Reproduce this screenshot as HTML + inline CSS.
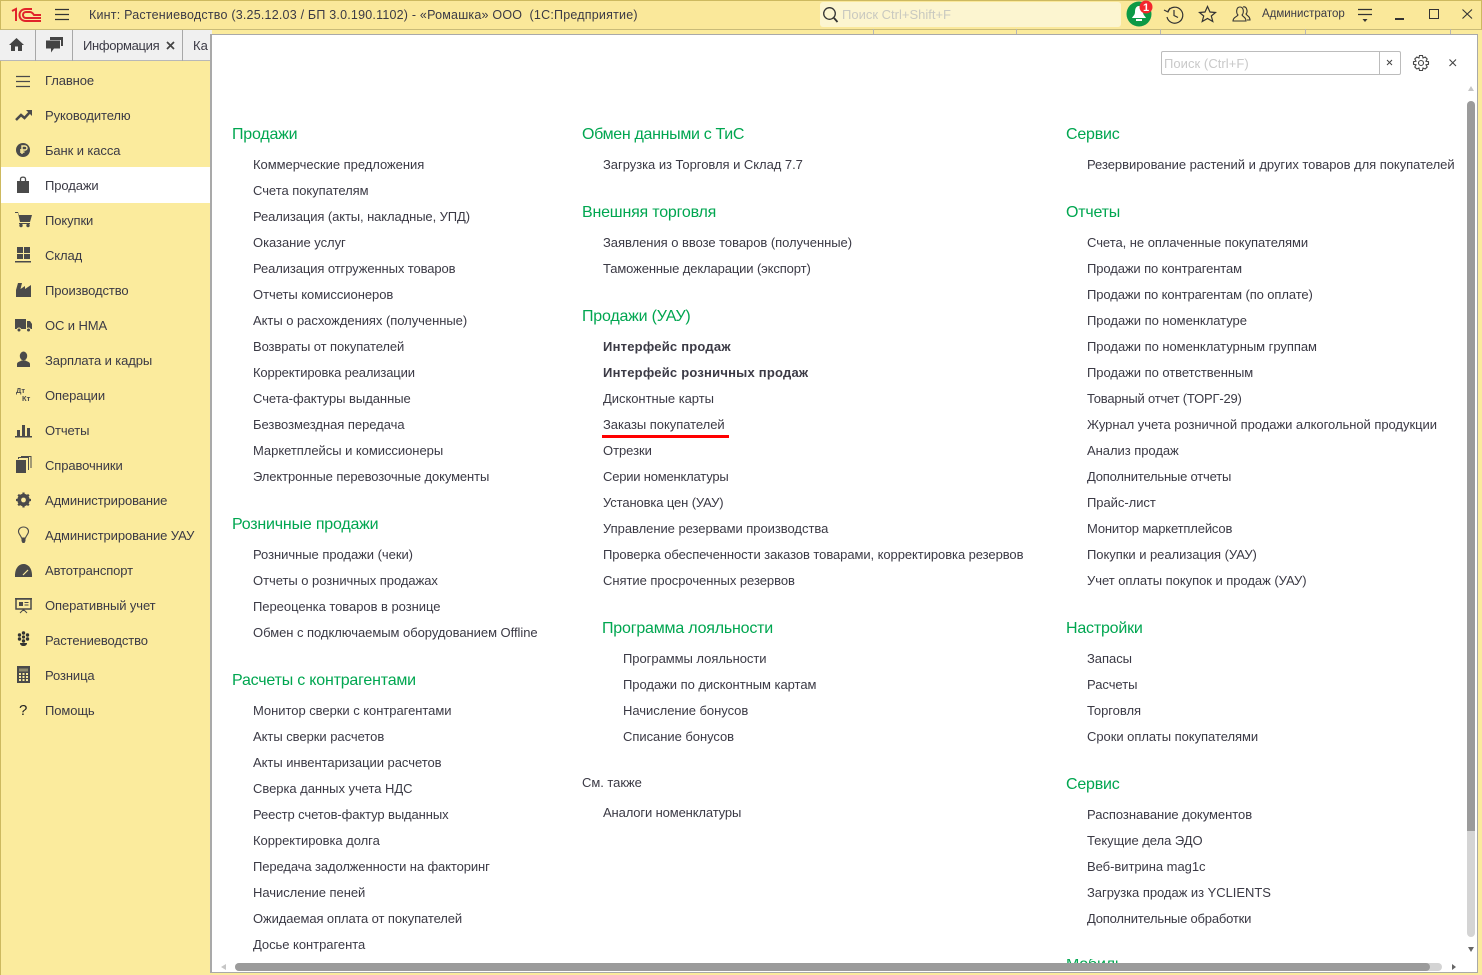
<!DOCTYPE html>
<html lang="ru"><head><meta charset="utf-8"><title>1С</title>
<style>
html,body{margin:0;padding:0;width:1482px;height:975px;overflow:hidden;background:#fbeb9d;font-family:"Liberation Sans","Noto Sans CJK SC",sans-serif}
*{box-sizing:border-box}
.a{position:absolute;white-space:nowrap}
#top{position:absolute;left:0;top:0;width:1482px;height:30px;background:#fae89a;border:1px solid #cdb95f;border-bottom:1px solid #c9bb78}
#tabs{position:absolute;left:0;top:30px;width:212px;height:31px;background:#f0f0f0;border-bottom:1px solid #b8b8b8}
.tabdiv{position:absolute;top:30px;width:1px;height:31px;background:#a8a8a8}
#side{position:absolute;left:0;top:61px;width:211px;height:914px;background:#fbeb9d;border-left:1px solid #cdb95f}
#sel{position:absolute;left:1px;top:167px;width:210px;height:36px;background:#fff}
#main{position:absolute;left:210px;top:34px;width:1268px;height:939px;background:#fff;border:1px solid #a9a9a9;border-width:1px 1px 1px 2px}
.m{position:absolute;left:45px;margin-top:1px;font-size:13px;letter-spacing:-.1px;color:#3b3a45;line-height:16px;white-space:nowrap}
.l{position:absolute;margin-top:1px;font-size:13px;letter-spacing:-.04px;color:#3b3a45;line-height:16px;white-space:nowrap}
.b{font-weight:bold;letter-spacing:.22px}
.h{position:absolute;margin-top:2px;font-size:16px;letter-spacing:-.2px;color:#00a650;line-height:20px;white-space:nowrap}
svg.i{position:absolute;left:15px;width:18px;height:18px;fill:#4a4a4a}
</style></head><body>

<div id="top"></div>
<svg class="a" style="left:11px;top:6px" width="32" height="17" viewBox="0 0 32 17"><g fill="none" stroke="#e1232a" stroke-width="2"><path d="M1 5 5 3V15"/><path d="M30 15H15C11 15 8.500 12.500 8.500 9S11 3 15 3H21"/><path d="M30 12H15C13 12 12 10.500 12 9S13 6 15 6H19C21 6 22 7.500 23 9H30"/></g></svg>
<svg class="a" style="left:55px;top:8px" width="15" height="14"><path d="M0 1.500H14M0 6.500H14M0 11.500H14" stroke="#333" stroke-width="1.200"/></svg>
<div class="a" style="left:89px;top:7px;font-size:12.500px;color:#3b3a45;line-height:16px;letter-spacing:.21px">Кинт: Растениеводство (3.25.12.03 / БП 3.0.190.1102) - «Ромашка» ООО&nbsp; (1С:Предприятие)</div>

<div class="a" style="left:820px;top:2px;width:301px;height:25px;background:#fcf5d0;border-radius:3px"></div>
<svg class="a" style="left:822px;top:6px" width="17" height="18" fill="none" stroke="#333" stroke-width="1.300"><circle cx="7.500" cy="7.500" r="5.800"/><path d="M12 12 15.500 16" stroke-width="1.800"/></svg>
<div class="a" style="left:842px;top:7px;font-size:13px;color:#c9c9c0;line-height:16px;letter-spacing:0">Поиск Ctrl+Shift+F</div>

<svg class="a" style="left:1126px;top:0" width="30" height="28"><circle cx="13" cy="14" r="12.500" fill="#0c9a46"/><path d="M13 6c3 0 4 3 4 6 0 3 2 4 3 6H6c1-2 3-3 3-6 0-3 1-6 4-6Z" fill="#fff"/><rect x="10" y="19" width="6" height="2" fill="#fff"/><circle cx="20" cy="7" r="6.500" fill="#f3262d"/><text x="20" y="11" text-anchor="middle" font-family="Liberation Sans" font-weight="bold" font-size="11" fill="#fff">1</text></svg>
<svg class="a" style="left:1163px;top:4px" width="22" height="21" fill="none" stroke="#333" stroke-width="1.200"><path d="M5 7A8 8 0 1 1 4 13"/><path d="M1 6 5 8 7 4"/><path d="M11 6V11.500L15 13.500"/></svg>
<svg class="a" style="left:1198px;top:5px" width="19" height="18" fill="none" stroke="#333" stroke-width="1.200"><path d="M9.500 1.500 12 7 17.500 7.500 13.300 11 14.800 16.500 9.500 13.500 4.200 16.500 5.700 11 1.500 7.500 7 7Z"/></svg>
<svg class="a" style="left:1232px;top:5px" width="20" height="18" fill="none" stroke="#333" stroke-width="1.100"><path d="M1 16C1 12 5 12 6 10 4 8 4 2 8 2S12 8 10 10C11 12 14 12 14 16Z"/><path d="M11 2C15 1 16 7 14 9 15 11 18 11 18 15H15"/></svg>
<div class="a" style="left:1262px;top:7px;font-size:11.500px;color:#3b3a45;line-height:15px;letter-spacing:-.02px">Администратор</div>
<svg class="a" style="left:1358px;top:7px" width="15" height="16" fill="#333"><path d="M0 2.500H14M0 7.500H14" stroke="#333" stroke-width="1.200" fill="none"/><path d="M4.500 12H9.500L7 15Z"/></svg>
<div class="a" style="left:1395px;top:18px;width:9px;height:2px;background:#333"></div>
<div class="a" style="left:1429px;top:9px;width:10px;height:10px;border:1.500px solid #333"></div>
<svg class="a" style="left:1462px;top:9px" width="11" height="10" fill="none" stroke="#333" stroke-width="1.100"><path d="M.5 .5 10 9.500M10 .5 .5 9.500"/></svg>

<div id="tabs"></div>
<div class="tabdiv" style="left:35px"></div><div class="tabdiv" style="left:72px"></div><div class="tabdiv" style="left:182px"></div>
<svg class="a" style="left:9px;top:37px" width="15" height="14" fill="#444"><path d="M7.500 1 15 8H13V14H9V9.500H6V14H2V8H0Z"/></svg>
<svg class="a" style="left:45px;top:37px" width="18" height="17" fill="#444"><path d="M5 0H18V9H16V3H5Z"/><path d="M1 3H15V11H9L6 15V11H1Z" transform="translate(0 .5)"/></svg>
<div class="a" style="left:83px;top:38px;font-size:13px;color:#3b3a45;line-height:16px;letter-spacing:-.33px">Информация</div>
<svg class="a" style="left:166px;top:41px" width="9" height="9" fill="none" stroke="#444" stroke-width="1.700"><path d="M1 1 8 8M8 1 1 8"/></svg>
<div class="a" style="left:193px;top:38px;font-size:13px;color:#3b3a45;line-height:16px;width:17px;overflow:hidden">Ка</div>

<div id="side"></div>
<div id="sel"></div>

<div class="m" style="top:72px">Главное</div>
<div class="m" style="top:107px">Руководителю</div>
<div class="m" style="top:142px">Банк и касса</div>
<div class="m" style="top:177px">Продажи</div>
<div class="m" style="top:212px">Покупки</div>
<div class="m" style="top:247px">Склад</div>
<div class="m" style="top:282px">Производство</div>
<div class="m" style="top:317px">ОС и НМА</div>
<div class="m" style="top:352px">Зарплата и кадры</div>
<div class="m" style="top:387px">Операции</div>
<div class="m" style="top:422px">Отчеты</div>
<div class="m" style="top:457px">Справочники</div>
<div class="m" style="top:492px">Администрирование</div>
<div class="m" style="top:527px">Администрирование УАУ</div>
<div class="m" style="top:562px">Автотранспорт</div>
<div class="m" style="top:597px">Оперативный учет</div>
<div class="m" style="top:632px">Растениеводство</div>
<div class="m" style="top:667px">Розница</div>
<div class="m" style="top:702px">Помощь</div>

<svg class="i" style="top:72px"><path d="M1 4.500H15M1 9.500H15M1 14.500H15" stroke="#4a4a4a" stroke-width="1.200" fill="none"/></svg>
<svg class="i" style="top:107px"><path d="M1 13 6 8 9.500 11 15 5" stroke="#4a4a4a" stroke-width="2.500" fill="none"/><path d="M11 3H17V9Z"/></svg>
<svg class="i" style="top:141px"><circle cx="8" cy="9" r="7"/><path d="M7 13V5H10A2 2 0 0 1 10 9H5M5 11H9.500" stroke="#fbeb9d" stroke-width="1.400" fill="none"/></svg>
<svg class="i" style="top:176px"><path d="M2 5H14V17H2Z"/><path d="M5.500 8V3C5.500 .5 10.500 .5 10.500 3V8" stroke="#4a4a4a" stroke-width="1.300" fill="none"/></svg>
<svg class="i" style="top:211px"><path d="M0 1H3L4 4H17L15 11H5L3 2H0Z"/><circle cx="6" cy="14.500" r="1.700"/><circle cx="13" cy="14.500" r="1.700"/><path d="M4 12H15V13H4Z"/></svg>
<svg class="i" style="top:246px"><path d="M2 1H8V7H2ZM9 1H15V7H9ZM2 8H8V13H2ZM9 8H15V13H9ZM0 15H16V16.500H0Z"/></svg>
<svg class="i" style="top:281px"><path d="M1 16V9L3 2H7L5.500 8 10 5 10 8 16 4V16Z"/></svg>
<svg class="i" style="top:316px"><path d="M0 3H11V13H0ZM12 5H15L17 8V13H12Z"/><circle cx="4" cy="14" r="2" stroke="#fbeb9d"/><circle cx="13.500" cy="14" r="2" stroke="#fbeb9d"/></svg>
<svg class="i" style="top:351px"><ellipse cx="8.500" cy="5" rx="3.700" ry="4.500"/><path d="M2 16V13C2 11 5 10.500 6.500 9.500H10.500C12 10.500 15 11 15 13V16Z"/></svg>
<div class="a" style="left:16px;top:387px;font-size:7.500px;font-weight:bold;color:#4a4a4a;line-height:8px">Дт</div>
<div class="a" style="left:22px;top:395px;font-size:7.500px;font-weight:bold;color:#4a4a4a;line-height:8px">Кт</div>
<svg class="i" style="top:421px"><path d="M2 9H5V15H2ZM7 4H10V15H7ZM12 7H15V15H12ZM0 15H17V16.500H0Z"/></svg>
<svg class="i" style="top:456px"><path d="M1 4H11V17H1Z"/><path d="M3.500 3V1.500H13.500V14M6 .5H16V12" fill="none" stroke="#4a4a4a" stroke-width="1"/></svg>
<svg class="i" style="top:491px"><circle cx="8.500" cy="9" r="4.700" fill="none" stroke="#4a4a4a" stroke-width="3"/><path d="M8.500 1.500V16.500M1 9H16M3.200 3.700 13.800 14.300M13.800 3.700 3.200 14.300" stroke="#4a4a4a" stroke-width="2.200"/><circle cx="8.500" cy="9" r="2.400" fill="#fbeb9d"/></svg>
<svg class="i" style="top:526px"><path d="M8.500 1C5.500 1 3.500 3 3.500 5.500 3.500 8 6 9.500 6.500 12H10.500C11 9.500 13.500 8 13.500 5.500 13.500 3 11.500 1 8.500 1Z" fill="none" stroke="#4a4a4a" stroke-width="1.100"/><path d="M6.500 12.500H10.500V15L9.500 17H7.500L6.500 15Z"/></svg>
<svg class="i" style="top:561px"><path d="M0 16C-.5 7 4 3 8.500 3S17.500 7 17 16Z"/><path d="M8 14 13 9" stroke="#fbeb9d" stroke-width="1.200"/></svg>
<svg class="i" style="top:596px"><path d="M1 3H16V13H1Z" fill="none" stroke="#4a4a4a" stroke-width="1.500"/><path d="M0 2H17V3.500H0ZM4 6H8V10H4ZM9.500 6H13.500V7H9.500ZM9.500 8.500H13.500V9.500H9.500ZM8 13.500H9V15H8Z"/><path d="M5 17 8.500 13.500 12 17" fill="none" stroke="#4a4a4a"/></svg>
<svg class="i" style="top:631px;fill:#333"><circle cx="8.500" cy="6" r="1.600"/><circle cx="8.500" cy="2" r="1.700"/><circle cx="8.500" cy="10" r="1.700"/><circle cx="4.500" cy="4" r="1.700"/><circle cx="12.500" cy="4" r="1.700"/><circle cx="4.500" cy="8" r="1.700"/><circle cx="12.500" cy="8" r="1.700"/><path d="M5 12H12C12 14 10.500 15 8.500 15S5 14 5 12Z"/></svg>
<svg class="i" style="top:666px"><path d="M2 0H15V17H2Z"/><path d="M4 2.500H13V5.500H4Z" fill="#8f8b6c"/><path d="M4 7H6V9H4ZM7.500 7H9.500V9H7.500ZM11 7H13V9H11ZM4 10H6V12H4ZM7.500 10H9.500V12H7.500ZM11 10H13V12H11ZM4 13H6V15H4ZM7.500 13H9.500V15H7.500ZM11 13H13V15H11Z" fill="#fbeb9d"/></svg>
<div class="a" style="left:19px;top:702px;font-size:15px;color:#222;line-height:18px">?</div>

<div id="main"></div>
<!-- main toolbar -->
<div class="a" style="left:1161px;top:51px;width:240px;height:24px;background:#fff;border:1px solid #bcbcbc;border-radius:2px"></div>
<div class="a" style="left:1379px;top:52px;width:1px;height:22px;background:#bcbcbc"></div>
<div class="a" style="left:1164px;top:56px;font-size:13px;letter-spacing:.05px;color:#c9c9c9;line-height:16px">Поиск (Ctrl+F)</div>
<svg class="a" style="left:1386px;top:59px" width="8" height="8" fill="none" stroke="#444"><path d="M1 1 6 6M6 1 1 6"/></svg>
<svg class="a" style="left:1412px;top:54px" width="18" height="18" fill="none" stroke="#444" stroke-width="1.100"><circle cx="9" cy="9" r="2.500"/><path d="M7.500 1.500H10.500L11 4 13.200 3 15.200 5 14 7.200 16.500 7.700V10.300L14 10.800 15.200 13 13.200 15 11 14 10.500 16.500H7.500L7 14 4.800 15 2.800 13 4 10.800 1.500 10.300V7.700L4 7.200 2.800 5 4.800 3 7 4Z"/></svg>
<svg class="a" style="left:1449px;top:59px" width="8" height="8" fill="none" stroke="#444" stroke-width="1.100"><path d="M.5 .5 7 7M7 .5 .5 7"/></svg>

<!-- Col 1 -->
<div class="h" style="left:232px;top:123px">Продажи</div>
<div class="l" style="left:253px;top:156px">Коммерческие предложения</div>
<div class="l" style="left:253px;top:182px">Счета покупателям</div>
<div class="l" style="left:253px;top:208px;letter-spacing:-.1px">Реализация (акты, накладные, УПД)</div>
<div class="l" style="left:253px;top:234px">Оказание услуг</div>
<div class="l" style="left:253px;top:260px;letter-spacing:-.1px">Реализация отгруженных товаров</div>
<div class="l" style="left:253px;top:286px">Отчеты комиссионеров</div>
<div class="l" style="left:253px;top:312px">Акты о расхождениях (полученные)</div>
<div class="l" style="left:253px;top:338px;letter-spacing:-.1px">Возвраты от покупателей</div>
<div class="l" style="left:253px;top:364px;letter-spacing:-.15px">Корректировка реализации</div>
<div class="l" style="left:253px;top:390px">Счета-фактуры выданные</div>
<div class="l" style="left:253px;top:416px">Безвозмездная передача</div>
<div class="l" style="left:253px;top:442px">Маркетплейсы и комиссионеры</div>
<div class="l" style="left:253px;top:468px;letter-spacing:-.1px">Электронные перевозочные документы</div>
<div class="h" style="left:232px;top:513px">Розничные продажи</div>
<div class="l" style="left:253px;top:546px">Розничные продажи (чеки)</div>
<div class="l" style="left:253px;top:572px">Отчеты о розничных продажах</div>
<div class="l" style="left:253px;top:598px">Переоценка товаров в рознице</div>
<div class="l" style="left:253px;top:624px">Обмен с подключаемым оборудованием Offline</div>
<div class="h" style="left:232px;top:669px">Расчеты с контрагентами</div>
<div class="l" style="left:253px;top:702px">Монитор сверки с контрагентами</div>
<div class="l" style="left:253px;top:728px">Акты сверки расчетов</div>
<div class="l" style="left:253px;top:754px">Акты инвентаризации расчетов</div>
<div class="l" style="left:253px;top:780px">Сверка данных учета НДС</div>
<div class="l" style="left:253px;top:806px;letter-spacing:-.1px">Реестр счетов-фактур выданных</div>
<div class="l" style="left:253px;top:832px">Корректировка долга</div>
<div class="l" style="left:253px;top:858px;letter-spacing:-.1px">Передача задолженности на факторинг</div>
<div class="l" style="left:253px;top:884px">Начисление пеней</div>
<div class="l" style="left:253px;top:910px;letter-spacing:-.1px">Ожидаемая оплата от покупателей</div>
<div class="l" style="left:253px;top:936px">Досье контрагента</div>

<!-- Col 2 -->
<div class="h" style="left:582px;top:123px;letter-spacing:-.32px">Обмен данными с ТиС</div>
<div class="l" style="left:603px;top:156px">Загрузка из Торговля и Склад 7.7</div>
<div class="h" style="left:582px;top:201px">Внешняя торговля</div>
<div class="l" style="left:603px;top:234px">Заявления о ввозе товаров (полученные)</div>
<div class="l" style="left:603px;top:260px;letter-spacing:-.12px">Таможенные декларации (экспорт)</div>
<div class="h" style="left:582px;top:305px">Продажи (УАУ)</div>
<div class="l b" style="left:603px;top:338px">Интерфейс продаж</div>
<div class="l b" style="left:603px;top:364px">Интерфейс розничных продаж</div>
<div class="l" style="left:603px;top:390px">Дисконтные карты</div>
<div class="l" style="left:603px;top:416px">Заказы покупателей</div>
<div class="a" style="left:602px;top:435px;width:127px;height:3px;background:#f00"></div>
<div class="l" style="left:603px;top:442px">Отрезки</div>
<div class="l" style="left:603px;top:468px;letter-spacing:-.2px">Серии номенклатуры</div>
<div class="l" style="left:603px;top:494px;letter-spacing:-.12px">Установка цен (УАУ)</div>
<div class="l" style="left:603px;top:520px">Управление резервами производства</div>
<div class="l" style="left:603px;top:546px;letter-spacing:-.07px">Проверка обеспеченности заказов товарами, корректировка резервов</div>
<div class="l" style="left:603px;top:572px">Снятие просроченных резервов</div>
<div class="h" style="left:602px;top:617px">Программа лояльности</div>
<div class="l" style="left:623px;top:650px">Программы лояльности</div>
<div class="l" style="left:623px;top:676px">Продажи по дисконтным картам</div>
<div class="l" style="left:623px;top:702px">Начисление бонусов</div>
<div class="l" style="left:623px;top:728px">Списание бонусов</div>
<div class="l" style="left:582px;top:774px">См. также</div>
<div class="l" style="left:603px;top:804px;letter-spacing:-.13px">Аналоги номенклатуры</div>

<!-- Col 3 -->
<div class="h" style="left:1066px;top:123px">Сервис</div>
<div class="l" style="left:1087px;top:156px">Резервирование растений и других товаров для покупателей</div>
<div class="h" style="left:1066px;top:201px">Отчеты</div>
<div class="l" style="left:1087px;top:234px">Счета, не оплаченные покупателями</div>
<div class="l" style="left:1087px;top:260px;letter-spacing:-.1px">Продажи по контрагентам</div>
<div class="l" style="left:1087px;top:286px;letter-spacing:-.1px">Продажи по контрагентам (по оплате)</div>
<div class="l" style="left:1087px;top:312px">Продажи по номенклатуре</div>
<div class="l" style="left:1087px;top:338px">Продажи по номенклатурным группам</div>
<div class="l" style="left:1087px;top:364px">Продажи по ответственным</div>
<div class="l" style="left:1087px;top:390px;letter-spacing:-.2px">Товарный отчет (ТОРГ-29)</div>
<div class="l" style="left:1087px;top:416px">Журнал учета розничной продажи алкогольной продукции</div>
<div class="l" style="left:1087px;top:442px">Анализ продаж</div>
<div class="l" style="left:1087px;top:468px;letter-spacing:-.2px">Дополнительные отчеты</div>
<div class="l" style="left:1087px;top:494px">Прайс-лист</div>
<div class="l" style="left:1087px;top:520px;letter-spacing:-.15px">Монитор маркетплейсов</div>
<div class="l" style="left:1087px;top:546px">Покупки и реализация (УАУ)</div>
<div class="l" style="left:1087px;top:572px">Учет оплаты покупок и продаж (УАУ)</div>
<div class="h" style="left:1066px;top:617px">Настройки</div>
<div class="l" style="left:1087px;top:650px">Запасы</div>
<div class="l" style="left:1087px;top:676px">Расчеты</div>
<div class="l" style="left:1087px;top:702px">Торговля</div>
<div class="l" style="left:1087px;top:728px">Сроки оплаты покупателями</div>
<div class="h" style="left:1066px;top:773px">Сервис</div>
<div class="l" style="left:1087px;top:806px">Распознавание документов</div>
<div class="l" style="left:1087px;top:832px">Текущие дела ЭДО</div>
<div class="l" style="left:1087px;top:858px">Веб-витрина mag1c</div>
<div class="l" style="left:1087px;top:884px">Загрузка продаж из YCLIENTS</div>
<div class="l" style="left:1087px;top:910px;letter-spacing:-.2px">Дополнительные обработки</div>
<div class="a" style="left:1066px;top:959px;height:4px;width:56px;overflow:hidden"><div class="h" style="left:0;top:-6px">Мобиль</div></div>

<!-- Scrollbars -->
<div class="a" style="left:212px;top:963px;width:1264px;height:9px;background:#fff"></div>
<div class="a" style="left:235px;top:963px;width:1207px;height:8px;background:#d4d4d4;border-radius:4px"></div>
<div class="a" style="left:235px;top:963px;width:1195px;height:8px;background:#9b9b9b;border-radius:4px"></div>
<svg class="a" style="left:220px;top:963px" width="8" height="8" fill="#c6c6c6"><path d="M6 1V7L1 4Z"/></svg>
<svg class="a" style="left:1450px;top:963px" width="8" height="8" fill="#666"><path d="M2 1V7L6 4Z"/></svg>
<div class="a" style="left:1467px;top:101px;width:8px;height:730px;background:#9b9b9b;border-radius:4px 4px 0 0"></div>
<div class="a" style="left:1467px;top:831px;width:8px;height:106px;background:#d4d4d4;border-radius:0 0 4px 4px"></div>
<svg class="a" style="left:1467px;top:85px" width="8" height="8" fill="#c6c6c6"><path d="M1 6H7L4 1Z"/></svg>
<svg class="a" style="left:1467px;top:945px" width="8" height="8" fill="#666"><path d="M1 2H7L4 7Z"/></svg>

<!-- behind-main dividers at top -->
<div class="a" style="left:873px;top:29px;width:1px;height:5px;background:#b5b5b5"></div>
<div class="a" style="left:1016px;top:29px;width:1px;height:5px;background:#b5b5b5"></div>
<div class="a" style="left:1160px;top:29px;width:1px;height:5px;background:#b5b5b5"></div>
<div class="a" style="left:1305px;top:29px;width:1px;height:5px;background:#b5b5b5"></div>
<div class="a" style="left:1450px;top:29px;width:1px;height:5px;background:#b5b5b5"></div>
<div class="a" style="left:212px;top:30px;width:1270px;height:4px;background:#f0f0f0;z-index:-1"></div>
</body></html>
